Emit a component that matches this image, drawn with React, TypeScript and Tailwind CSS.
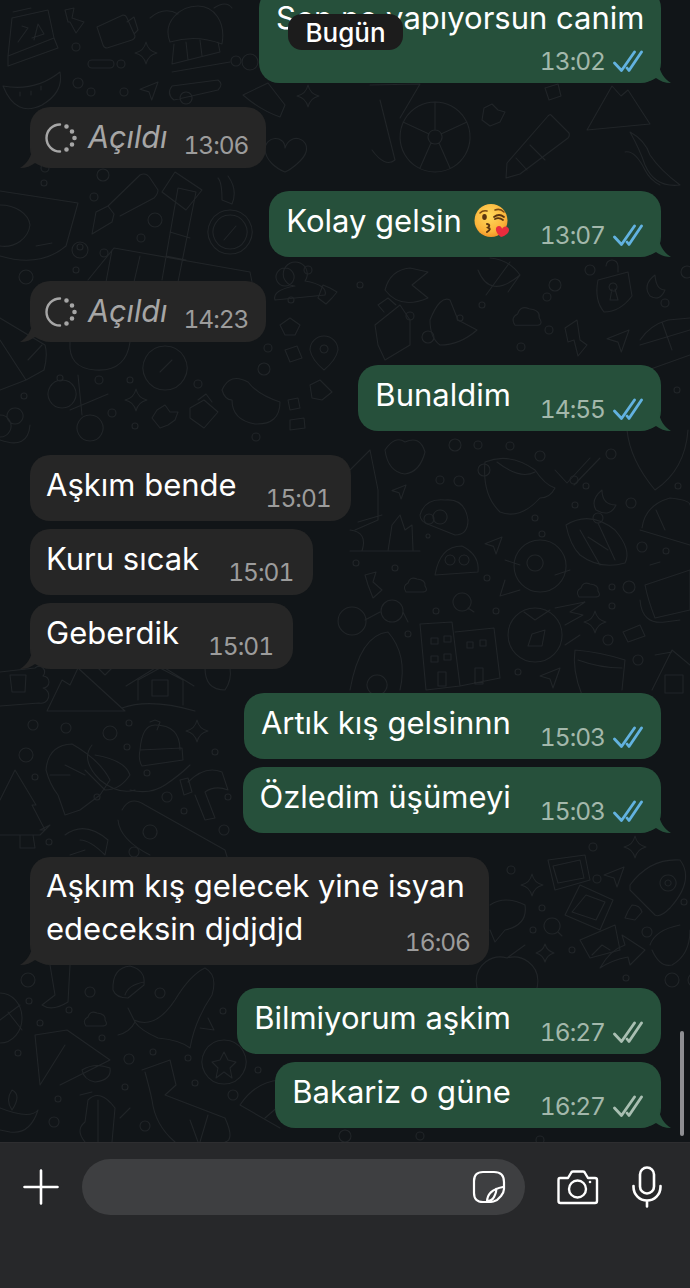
import React from "react";

const DoubleCheck = ({ color }: { color: string }) => (
  <svg width="30" height="23" viewBox="0 0 30 23" fill="none" stroke={color} strokeWidth="2.8" strokeLinecap="round" strokeLinejoin="round">
    <path d="M1.5 13 L8.5 20.5 L21.5 2" />
    <path d="M14 18 L16 20.5 L28.5 2" />
  </svg>
);

const TailRight = () => (
  <svg className="absolute right-[-11px] bottom-0" width="24" height="20" viewBox="0 0 24 20" fill="#26503b">
    <path d="M0 0 H11 C11 8 16 16 23 20 C17 20 12 18 8 15 C5 17 2 18 0 18 Z" />
  </svg>
);

const TailLeft = () => (
  <svg className="absolute left-[-11px] bottom-0" width="24" height="20" viewBox="0 0 24 20" fill="#262626">
    <path d="M24 0 H13 C13 8 8 16 1 20 C7 20 12 18 16 15 C19 17 22 18 24 18 Z" />
  </svg>
);

const Spinner = () => (
  <svg width="32" height="32" viewBox="0 0 32 32" fill="none" stroke="#a6a6a6" strokeWidth="2.4" strokeLinecap="round">
    <path d="M15 2.5 A13.5 13.5 0 0 0 15 29.5" />
    <circle cx="21.5" cy="4.5" r="1.1" fill="#a6a6a6" />
    <circle cx="27" cy="9.5" r="1.1" fill="#a6a6a6" />
    <circle cx="29.5" cy="16" r="1.1" fill="#a6a6a6" />
    <circle cx="27" cy="22.5" r="1.1" fill="#a6a6a6" />
    <circle cx="21.5" cy="27.5" r="1.1" fill="#a6a6a6" />
  </svg>
);

const KissEmoji = () => (
  <svg width="37" height="36" viewBox="0 0 37 36" className="ml-[12px]">
    <defs>
      <radialGradient id="kf" cx="45%" cy="35%" r="70%">
        <stop offset="0%" stopColor="#ffd95c" />
        <stop offset="70%" stopColor="#fbb33a" />
        <stop offset="100%" stopColor="#ef8b23" />
      </radialGradient>
    </defs>
    <circle cx="17" cy="17.5" r="16.5" fill="url(#kf)" />
    <path d="M6 10 Q9 7 13 8 M21 7 Q26 5 30 9" stroke="#7a4a12" strokeWidth="1.6" fill="none" strokeLinecap="round" />
    <ellipse cx="10.5" cy="14" rx="2.3" ry="3" fill="#5a3510" />
    <path d="M20 14 Q25 10 30 14 M21 16 Q25 14 29 17" stroke="#5a3510" strokeWidth="1.8" fill="none" strokeLinecap="round" />
    <path d="M13 21 Q17 22 14 24.5 Q18 26 13 29" stroke="#5a3510" strokeWidth="2" fill="none" strokeLinecap="round" />
    <path d="M27 34 C20 29 21 23 25 23 C27 23 28 25 28 26 C29 24 31 23 33 24 C37 26 35 32 27 34 Z" fill="#ea2c3d" />
  </svg>
);

const spark = (x: number, y: number, r: number) =>
  `M${x} ${y - r} Q${x + 2} ${y - 2} ${x + r} ${y} Q${x + 2} ${y + 2} ${x} ${y + r} Q${x - 2} ${y + 2} ${x - r} ${y} Q${x - 2} ${y - 2} ${x} ${y - r}Z`;
const cloud = (x: number, y: number, w: number) => {
  const k = w / 26;
  return `M${x + 4 * k} ${y + 16 * k} Q${x} ${y + 10 * k} ${x + 6 * k} ${y + 7 * k} Q${x + 8 * k} ${y} ${x + 15 * k} ${y + 3 * k} Q${x + 24 * k} ${y + 4 * k} ${x + 23 * k} ${y + 10 * k} Q${x + 27 * k} ${y + 16 * k} ${x + 20 * k} ${y + 16 * k} Z`;
};
const nav = (x: number, y: number, s: number) =>
  `M${x} ${y + s * 0.4} L${x + s} ${y} L${x + s * 0.65} ${y + s} L${x + s * 0.5} ${y + s * 0.55} Z`;

const doodles: string[] = [
  "M8 56 L8 66 L58 48 L54 38 L48 10 L12 18 L8 56 L54 38 M13 12 L31 8",
  "M18 42 L28 28 L22 26 M34 40 L38 24 L44 34 L32 38",
  "M65 10 L74 8 L72 18 L84 22 L76 33 L70 22 L68 22 Z",
  "M97 27 L123 15 Q126 15 127 18 L135 36 Q135 39 132 40 L107 48 Q104 48 103 45 Z M127 22 L134 17 L138 30 L134 34",
  "M170 42 C162 22 180 6 198 6 C214 6 226 22 222 44 Q196 34 170 42 M174 44 L172 64 L220 52 L218 42 M186 42 L188 60 M200 40 L202 56 M172 72 L230 62 M150 18 Q164 6 178 14 M214 8 Q226 0 232 8",
  spark(146, 53, 11),
  "M92 60 h18 a4 4 0 0 1 0 8 h-18 a4 4 0 0 1 0 -8",
  "M3 86 Q35 92 60 72 Q64 92 42 105 Q16 118 3 86 Z M20 92 v4 M31 91 v4 M41 86 v4",
  nav(140, 82, 18),
  "M172 86 L218 80 Q224 84 218 90 L174 100 Q166 94 172 86 M186 92 a6 6 0 1 0 .1 0",
  "M243 95 L268 83 L285 105 L280 117 Q260 110 243 95",
  spark(308, 96, 11),
  "M435 102 a35 35 0 1 0 .1 0 M435 130 a7 7 0 1 0 .1 0 M435 102 V130 M403 122 L429 134 M467 122 L441 134 M420 168 L431 143 M450 168 L439 143",
  "M370 85 L420 84 L400 118 M380 100 L395 160 Q385 168 372 150",
  "M482 120 L484 108 L492 104 L498 110 L505 112 L500 122 L490 126 Z",
  "M551 115 L569 133 Q570 136 568 138 L520 174 L506 178 L507 163 L548 116 Q550 114 551 115 M516 158 L527 170 M530 145 L545 160",
  "M587 130 L612 86 L621 96 L628 90 L650 124 Z",
  "M545 88 L558 84 L561 96 L549 100 Z",
  "M630 132 Q645 140 650 155 Q660 170 680 185 Q655 188 645 165 Q640 150 630 132 M625 152 Q635 150 645 170 Q650 180 660 185",
  "M265 150 C265 135 285 135 285 148 C290 132 310 138 306 152 C304 160 290 170 285 172 C275 168 266 160 265 150",
  "M175 172 L202 190 L186 210 L162 192 Z",
  "M0 205 a30 22 0 0 1 30 20 a26 24 0 0 1 -30 21 M0 191 L78 203 L66 246 Q40 268 0 256 M36 246 L52 243",
  "M92 234 L96 212 L108 206 L114 214 L112 222 Z M108 206 L140 175 Q146 172 150 178 L158 190 Q158 194 154 198 L120 216",
  "M162 280 L178 188 L196 192 L178 282 M170 232 L190 238 M166 256 L186 260 M88 280 L114 248 L250 272 L252 282 M140 256 L134 282 M112 250 L106 282",
  "M230 210 a22 22 0 1 0 .1 0 M230 215 a17 17 0 1 0 .1 0 M224 240 L236 226 M218 178 Q222 182 222 200 L232 204 Q238 190 228 176",
  "M70 342 Q68 368 95 370 Q126 372 130 342",
  "M165 346 a22 22 0 1 0 .1 0 M160 372 L172 360",
  "M62 380 a14 14 0 1 0 .1 0 M78 375 L82 415 M108 394 L70 410 M90 415 a13 13 0 1 0 .1 0",
  spark(136, 400, 11),
  "M157 410 L165 405 L170 412 L178 412 L175 420 L168 425 L160 428 L152 418 Z",
  "M190 408 L204 400 L218 412 L204 428 L190 418 Z M198 400 L206 394 L212 402",
  "M222 390 Q230 372 248 382 Q258 395 280 402 Q280 425 255 424 Q232 420 232 400 Q225 400 222 390",
  "M0 318 L45 345 Q48 355 44 370 L26 380 L0 390 M0 340 L26 380 M28 360 L42 345",
  "M0 415 a11 11 0 1 0 .1 0 M15 408 a8 8 0 1 0 .1 0 M0 440 Q28 450 30 425",
  "M275 300 Q272 290 295 286 a12 12 0 1 1 10 -5 Q328 285 325 295 Z M285 268 a9 9 0 1 0 .1 0",
  "M323 285 L330 288 L337 292 L332 298 L326 304 L318 298 Z",
  "M385 290 Q390 270 410 268 L428 272 L412 285 L428 298 Q400 310 385 290",
  "M486 295 L510 262 M478 270 Q490 300 520 275 Q510 260 490 258 M508 292 L520 275",
  "M598 280 L628 272 L632 296 Q620 312 604 312 Q594 300 598 280 M606 266 a6 6 0 0 1 12 0 V272 M613 283 a4 4 0 1 0 .1 0 M612 289 L610 300 H618 L615 289",
  "M655 275 Q642 285 650 296 Q660 302 665 290 Q656 290 655 275",
  "M280 325 L290 318 L300 325 L295 335 L285 335 Z",
  "M310 350 a14 14 0 0 1 28 0 Q336 360 324 370 Q312 360 310 350 M324 345 a4 4 0 1 0 .1 0",
  "M285 350 L297 346 L302 358 L290 362 Z",
  "M375 325 L400 305 L410 320 L410 345 L385 360 L378 345 Z M384 312 L378 305 L388 298 L396 305",
  "M430 320 Q440 295 450 300 L458 320 L477 330 Q460 345 440 345 Q430 338 430 320",
  cloud(510, 305, 33),
  "M565 328 L577 320 L580 340 L587 345 L578 356 L574 340 L568 342 Z",
  nav(607, 330, 22),
  "M640 340 Q650 325 668 320 L690 318 M662 322 L672 350 M640 345 L690 330 M648 370 L690 355",
  "M310 385 L320 380 L332 392 L322 400 L312 398 Z",
  "M288 400 L298 398 L300 408 L290 410 Z M290 420 L304 418 L305 428 L290 430 Z",
  "M385 450 Q395 435 405 442 Q420 435 425 452 Q420 472 405 474 Q388 472 385 450",
  "M485 462 Q510 452 535 470 Q545 485 555 488 Q550 498 540 498 Q520 520 500 512 Q482 495 485 462 M497 462 Q520 480 535 472",
  "M555 470 L567 483 L590 458 M574 485 L600 458",
  "M602 490 Q590 500 596 510 Q610 518 616 505 Q602 505 602 490",
  "M627 430 Q630 460 655 490 Q685 470 688 430",
  "M642 528 Q645 505 670 498 Q690 500 690 505 M640 530 L690 545 M656 510 L665 530",
  "M420 515 Q425 498 445 500 Q465 498 468 520 Q468 535 455 535 L430 525 Q420 522 420 515 M440 510 a7 7 0 1 0 .1 0",
  nav(392, 485, 14),
  "M350 470 L370 450 L378 490 L378 520 L355 530 M358 522 L382 515",
  "M350 551 H420 M388 551 L392 525 L400 515 L405 530 L412 525 L413 550 M350 530 Q368 532 362 551",
  "M435 575 Q440 546 462 546 Q480 555 478 572 Z M450 555 a5 5 0 1 0 .1 0 M464 555 a5 5 0 1 0 .1 0",
  nav(485, 537, 17),
  "M540 540 a26 26 0 1 0 .1 52 a26 26 0 1 0 -.1 -52 M535 555 a8 8 0 1 0 .1 0 M505 560 L520 565 M570 570 L555 575 M520 590 L500 596 L505 580",
  "M566 525 Q590 510 615 530 Q632 550 625 563 Q600 570 580 555 Q570 545 566 525 M580 530 L600 565 M598 523 L615 560 M588 537 L608 550",
  "M645 585 L690 570 L690 610 L655 618 Q648 600 645 585 M650 565 L660 562 M640 600 Q642 625 665 622 L680 620",
  "M365 575 L376 572 L373 582 L382 590 L373 598 L368 585 Z",
  cloud(402, 576, 26),
  "M352 607 a14 14 0 1 0 .1 28 a14 14 0 1 0 -.1 -28 M392 600 a11 11 0 1 0 .1 22 a11 11 0 1 0 -.1 -22 M365 620 L380 612 M403 612 L408 622",
  "M462 593 a9 9 0 1 0 .1 0 M468 608 L474 612",
  cloud(575, 581, 26),
  "M535 608 a27 27 0 1 0 .1 54 a27 27 0 1 0 -.1 -54 M532 634 L545 630 L542 646 L528 646 Z M524 612 L535 620 L550 610",
  "M555 608 L585 602 L570 612 L583 615 L565 625 M580 635 L565 645",
  spark(595, 622, 11),
  "M623 632 L640 625 L645 636 L628 642 Z",
  "M420 624 L452 622 L460 686 L426 690 Z M455 632 L494 628 L500 678 L460 686 M431 638 h7 v6 h-7 z M444 636 h7 v6 h-7 z M431 656 h7 v6 h-7 z M444 654 h7 v6 h-7 z M467 642 h6 v6 h-6 z M480 640 h6 v6 h-6 z M438 672 h8 v14 h-8 z M475 668 h8 v16 h-8 z",
  "M350 690 Q360 635 388 632 Q408 655 400 690 M377 675 a10 10 0 1 0 .1 0",
  "M575 650 Q600 652 625 660 L622 690 M575 650 Q572 670 582 695 M578 660 Q600 668 622 668",
  "M652 690 L672 650 L690 665 M655 655 L672 652 M665 675 h18 v18 h-18 z",
  nav(540, 668, 20),
  "M0 672 L35 668 a5 5 0 0 1 8 8 a5 5 0 0 1 0 12 a5 5 0 0 1 -4 15 L0 706 M10 675 L26 675 L25 692 L12 692 Z",
  "M47 711 H125 L78 668 L70 685 L62 680 Z M95 665 L105 675 L115 665",
  "M122 708 Q150 698 195 711 M138 700 V680 L160 668 L183 680 V705 M126 686 L160 665 L194 686 M152 680 H168 V696 H152 Z",
  "M205 668 Q205 690 225 690 Q232 680 230 668",
  "M140 750 Q142 725 155 725 Q180 725 180 750 M140 750 L182 748 L183 760 L142 766 Q138 760 140 750 M150 722 L155 720 L160 722 L157 730",
  spark(197, 731, 11),
  "M46 770 Q48 745 72 744 Q100 760 110 780 L100 795 L80 810 L65 815 L58 795 Q50 785 46 770 M65 765 L85 775 M50 775 L70 775 M85 770 L105 790 Q120 790 130 775 Q125 760 95 755",
  "M92 745 Q80 760 100 780 Q118 795 135 790 M130 790 Q150 795 165 785 Q180 775 190 765",
  "M180 780 L188 778 L192 792 L184 795 Z M188 782 Q205 765 222 772 L228 790 Q215 785 205 792 L215 818 L205 820 L195 795",
  "M0 800 L15 770 L36 805 L32 805 L45 830 L40 830 L50 825 L40 835 Q20 835 0 835 M20 835 L20 848 L35 848 L33 835",
  "M122 810 Q130 795 145 805 L225 850 L228 860 M118 820 Q120 840 150 855 M150 825 a7 7 0 1 0 .1 0",
  "M65 835 Q85 820 108 840 L105 855 Q90 840 80 840 M85 850 L70 855",
  "M548 860 L585 855 L590 880 L555 890 Z M553 866 L580 860 L584 878 L558 883 Z",
  "M580 885 L613 900 L600 930 L565 915 Z M586 895 L605 902 L596 920 L572 912 Z",
  "M580 940 L615 925 L620 950 L590 958 Z M592 955 L602 945 L610 950",
  "M600 968 Q610 950 625 945 L622 935 L645 950 L630 965 L628 957 Q612 960 600 968",
  spark(532, 885, 11),
  spark(635, 847, 11),
  "M630 885 Q650 858 680 860 Q695 880 670 908 Q660 918 655 915 L630 890 Z M668 875 a8 8 0 1 0 .1 0 M668 880 a3 3 0 1 0 .1 0 M625 918 Q628 910 632 905 Q640 905 642 912 L635 920 Z",
  nav(604, 867, 20),
  "M490 905 Q505 895 525 905 Q528 925 505 930 L495 942 L490 930",
  "M552 918 a8 8 0 1 0 .1 0 M558 932 L562 936",
  spark(545, 953, 9),
  "M507 958 a24 24 0 1 0 .1 46 a24 24 0 1 0 -.1 -46 M507 958 L525 945",
  "M650 945 Q655 930 680 925 M652 950 Q660 968 672 965 Q690 955 690 930",
  "M0 993 a22 25 0 0 1 22 24 a22 25 0 0 1 -22 26 M0 1020 L20 1005 M8 1012 L22 1030",
  "M50 965 L55 995 L42 1005 Q52 1012 68 1002 L70 965",
  "M113 990 Q112 968 130 966 Q146 970 144 985 L128 998 Q116 998 113 990 M125 995 Q128 985 144 982",
  cloud(82, 1010, 26),
  "M118 1035 Q130 1032 135 1022 L128 1008 L134 1020 Q155 1030 175 1000 Q190 975 205 968 Q218 975 212 995 Q195 1020 190 1048 Q180 1040 158 1038 Q140 1030 135 1022 M208 1018 L214 1030 L200 1028",
  "M35 1035 L67 1030 L110 1060 L60 1085 M35 1035 L40 1085 L65 1045 M82 1070 Q95 1062 110 1068 Q112 1080 95 1082 Q84 1080 82 1070",
  "M142 1070 L170 1060 L176 1085 L165 1095 L225 1118 Q235 1140 225 1142 M145 1072 Q150 1090 152 1100 Q155 1125 175 1142 M190 1120 L198 1142 M208 1115 L200 1142",
  "M224 1040 a22 22 0 1 0 .1 0 M224 1052 L228 1060 L236 1062 L230 1068 L232 1078 L224 1072 L216 1078 L218 1068 L212 1062 L220 1060 Z",
  "M240 1105 Q255 1082 280 1080 M240 1105 L280 1128 M265 1118 L280 1105",
  "M12 1090 Q5 1100 12 1110 Q22 1095 12 1090 M0 1108 Q30 1120 38 1110 Q30 1135 10 1132 L0 1130",
  "M85 1142 Q75 1130 85 1122 L88 1100 Q100 1088 115 1108 L112 1142 M98 1100 V1142 M120 1118 L130 1108 M80 1095 L92 1092",
];

const dots: [number, number, number][] = [
  [76, 47, 4], [121, 64, 4], [78, 83, 5], [91, 92, 4], [124, 92, 4], [236, 117, 5], [236, 61, 5], [250, 62, 8], [45, 168, 4],
  [103, 175, 6], [44, 183, 3], [155, 220, 7], [141, 238, 4], [80, 247, 3], [80, 250, 8], [104, 253, 4], [26, 277, 7], [76, 270, 3],
  [94, 197, 4], [60, 378, 3], [99, 380, 4], [130, 380, 3], [198, 384, 4], [264, 369, 6], [268, 348, 4], [24, 396, 3], [112, 413, 4],
  [135, 426, 3], [256, 437, 4], [308, 270, 4], [360, 285, 3], [291, 300, 3], [410, 316, 4], [428, 337, 6], [460, 318, 3], [482, 305, 3], [547, 297, 4],
  [549, 330, 4], [521, 347, 4], [555, 285, 6], [590, 270, 5], [665, 303, 4], [687, 272, 6], [677, 390, 3], [455, 445, 6],
  [478, 445, 4], [510, 446, 4], [540, 456, 5], [611, 454, 5], [440, 480, 4], [459, 481, 5], [429, 519, 5], [428, 536, 2], [484, 470, 6],
  [574, 480, 4], [586, 486, 3], [575, 505, 3], [631, 503, 5], [598, 518, 5], [678, 486, 3], [535, 518, 3], [542, 534, 3], [642, 547, 5], [666, 551, 3],
  [356, 563, 3], [395, 568, 3], [487, 578, 3], [612, 587, 3], [629, 587, 6], [612, 606, 3], [436, 611, 3], [496, 611, 3], [408, 634, 3],
  [608, 640, 5], [638, 660, 5], [518, 672, 3], [33, 725, 5], [66, 728, 5], [129, 723, 3], [110, 733, 7], [127, 747, 3], [215, 752, 3],
  [26, 755, 7], [35, 777, 3], [147, 773, 3], [97, 797, 3], [167, 797, 5], [184, 811, 3], [228, 797, 3], [224, 830, 5], [49, 842, 3], [134, 852, 5],
  [28, 980, 7], [90, 992, 5], [160, 993, 5], [29, 1001, 3], [69, 1010, 3], [223, 1011, 3], [40, 1023, 3], [102, 1038, 3], [153, 1052, 3], [129, 1059, 5], [18, 1053, 3],
  [188, 1058, 3], [195, 1083, 3], [58, 1099, 3], [125, 1087, 3], [54, 1122, 5], [145, 1126, 5], [233, 1095, 5], [258, 1070, 3],
  [593, 847, 4], [511, 870, 4], [597, 879, 4], [542, 908, 3], [533, 930, 3], [647, 932, 5], [684, 902, 3], [572, 950, 3], [626, 978, 3], [695, 980, 7],
  [672, 980, 7], [540, 1140, 4], [345, 1136, 6], [420, 1136, 4],
];

const Wallpaper = () => (
  <svg className="absolute left-0 top-0" width="690" height="1142" fill="none" stroke="#212528" strokeWidth="1.1" strokeLinecap="round" strokeLinejoin="round">
    {doodles.map((d, i) => (
      <path key={i} d={d} />
    ))}
    {dots.map(([x, y, r], i) => (
      <circle key={i} cx={x} cy={y} r={r} />
    ))}
  </svg>
);

const Time = ({ children, out }: { children: React.ReactNode; out?: boolean }) => (
  <span className={`text-[24.5px] leading-[30px] tabular-nums tracking-[-1px] whitespace-nowrap ${out ? "text-[#a3b8ab]" : "text-[#9c9c9c]"}`}>{children}</span>
);

const Out = ({ text, time, read, tail, emoji }: { text: string; time: string; read?: boolean; tail?: boolean; emoji?: boolean }) => (
  <div className="relative self-end flex items-end h-[66px] pl-[17px] pr-[18px] rounded-[20px] bg-[#26503b]">
    {tail && <TailRight />}
    <span className="self-start mt-[11px] flex items-center leading-[38px] text-[31px] text-white whitespace-nowrap">
      {text}
      {emoji && <KissEmoji />}
    </span>
    <span className="ml-[29px] mb-[7px] flex items-center gap-[8px]">
      <Time out>{time}</Time>
      <DoubleCheck color={read ? "#62b2e0" : "#a9bfb2"} />
    </span>
  </div>
);

const In = ({ text, time, tail }: { text: string; time: string; tail?: boolean }) => (
  <div className="relative self-start flex items-end h-[66px] pl-[16px] pr-[20px] rounded-[20px] bg-[#262626]">
    {tail && <TailLeft />}
    <span className="self-start mt-[11px] leading-[38px] text-[31px] text-white whitespace-nowrap">{text}</span>
    <span className="ml-[29px] mb-[8px]">
      <Time>{time}</Time>
    </span>
  </div>
);

const Seen = ({ time }: { time: string }) => (
  <div className="relative self-start flex items-center h-[61px] pl-[15px] pr-[17px] rounded-[20px] bg-[#262626]">
    <TailLeft />
    <Spinner />
    <span className="ml-[11px] text-[30.5px] italic leading-[38px] text-[#a6a6a6] -mt-[2px]">Açıldı</span>
    <span className="ml-[16px] mt-[15px]">
      <Time>{time}</Time>
    </span>
  </div>
);

export default function App() {
  return (
    <div className="relative w-[690px] h-[1288px] overflow-hidden bg-[#111518] font-['Inter','Liberation_Sans',sans-serif]">
      <div className="relative h-[1142px] overflow-hidden">
        <Wallpaper />
        <div className="relative flex flex-col pl-[30px] pr-[29px] -mt-[12px]">
          <div className="relative self-end w-[402px] h-[95px] pl-[17px] pr-[18px] rounded-[20px] bg-[#26503b]">
            <TailRight />
            <div className="pt-[11px] leading-[38px] text-[31px] text-white whitespace-nowrap">Sen ne yapıyorsun canim</div>
            <div className="flex items-center justify-end gap-[8px] mt-[9px]">
              <Time out>13:02</Time>
              <DoubleCheck color="#62b2e0" />
            </div>
          </div>
          <div className="mt-[24px] self-start"><Seen time="13:06" /></div>
          <div className="mt-[23px] self-end"><Out text="Kolay gelsin" time="13:07" read tail emoji /></div>
          <div className="mt-[24px] self-start"><Seen time="14:23" /></div>
          <div className="mt-[23px] self-end"><Out text="Bunaldim" time="14:55" read tail /></div>
          <div className="mt-[24px] flex flex-col gap-[8px]">
            <In text="Aşkım bende" time="15:01" />
            <In text="Kuru sıcak" time="15:01" />
            <In text="Geberdik" time="15:01" tail />
          </div>
          <div className="mt-[24px] flex flex-col gap-[8px]">
            <Out text="Artık kış gelsinnn" time="15:03" read />
            <Out text="Özledim üşümeyi" time="15:03" read tail />
          </div>
          <div className="relative self-start mt-[24px] w-[459px] h-[108px] pl-[16px] pr-[19px] rounded-[20px] bg-[#262626]">
            <TailLeft />
            <div className="pt-[7px] text-[31px] leading-[43px] text-white whitespace-nowrap">
              Aşkım kış gelecek yine isyan
              <br />
              edeceksin djdjdjd
            </div>
            <div className="absolute right-[19px] bottom-[8px]"><Time>16:06</Time></div>
          </div>
          <div className="mt-[23px] flex flex-col gap-[8px]">
            <Out text="Bilmiyorum aşkim" time="16:27" />
            <Out text="Bakariz o güne" time="16:27" tail />
          </div>
        </div>
        <div className="absolute left-[288px] top-[14px] w-[115px] h-[36px] rounded-[14px] bg-[#1c1c1c] flex items-center justify-center text-[26px] font-medium text-white">
          Bugün
        </div>
        <div className="absolute left-[680px] top-[1031px] w-[4px] h-[105px] rounded-full bg-[#8e8e92]" />
      </div>
      <div className="relative h-[146px] bg-[#27282a] border-t border-[#2e2e30] flex items-start pt-[16px]">
        <svg className="ml-[23px] mt-[10px]" width="36" height="36" viewBox="0 0 36 36" stroke="#fff" strokeWidth="2.6" strokeLinecap="round">
          <path d="M18 1.5 V34.5 M1.5 18 H34.5" />
        </svg>
        <div className="ml-[23px] w-[443px] h-[56px] rounded-[28px] bg-[#3e3f41] flex items-center justify-end pr-[19px]">
          <svg width="34" height="34" viewBox="0 0 34 34" fill="none" stroke="#fff" strokeWidth="2.2" strokeLinejoin="round" strokeLinecap="round">
            <path d="M11 2 H22 Q32 2 32 12 V19 Q32 22 29 26 L25 30 Q21 32 19 32 H11 Q2 32 2 23 V11 Q2 2 11 2 Z" />
            <path d="M15 32 Q15 20 31 17 M15 31 Q20 31 22 27 Q25 21 24 19" />
          </svg>
        </div>
        <svg className="ml-[32px] mt-[10px]" width="42" height="36" viewBox="0 0 42 36" fill="none" stroke="#fff" strokeWidth="2.4" strokeLinejoin="round">
          <path d="M3 9 Q1.5 9 1.5 11 V32 Q1.5 34 3.5 34 H38 Q40 34 40 32 V11 Q40 9 38 9 H31 L28 4 Q27.5 2.5 26 2.5 H16 Q14.5 2.5 14 4 L11 9 Z" />
          <circle cx="20.5" cy="20" r="8.5" />
          <circle cx="33" cy="13" r="1.3" fill="#fff" stroke="none" />
        </svg>
        <svg className="ml-[33px] mt-[7px]" width="30" height="42" viewBox="0 0 30 42" fill="none" stroke="#fff" strokeWidth="2.6" strokeLinecap="round">
          <rect x="8" y="1.5" width="14" height="26" rx="7" />
          <path d="M1.5 20 V21 A13.5 13.5 0 0 0 28.5 21 V20 M15 34.5 V40.5" />
        </svg>
      </div>
    </div>
  );
}
